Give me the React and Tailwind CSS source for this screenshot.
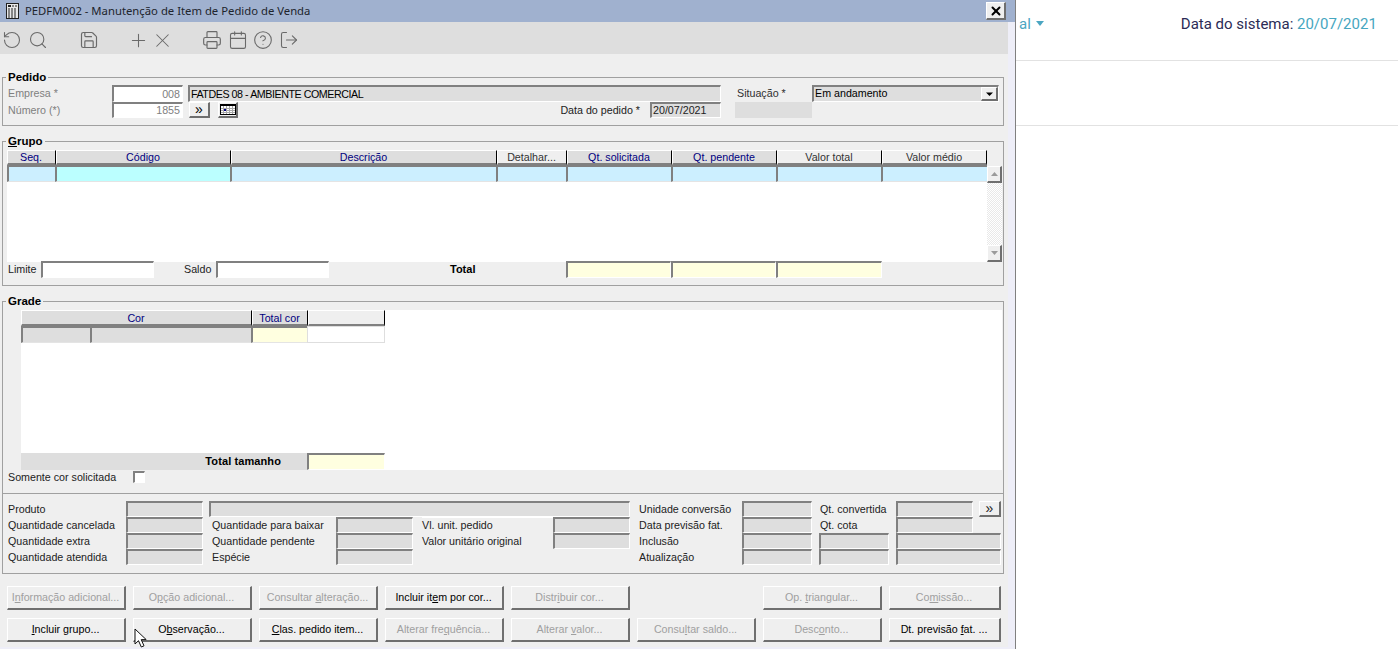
import React from "react";
import { RotateCcw, Search, Save, Plus, X, Printer, Calendar, CircleHelp, LogOut } from "lucide-react";

const sunken = "border-t-2 border-l-2 border-r border-b border-t-[#808080] border-l-[#808080] border-r-white border-b-white";
const raised = "border-t border-l border-r-2 border-b-2 border-t-white border-l-white border-r-[#6f6f6f] border-b-[#6f6f6f]";

function Field({ className = "", children }) {
  return (
    <div className={`${sunken} h-full flex items-center overflow-hidden whitespace-nowrap leading-none shrink-0 ${className}`}>
      {children}
    </div>
  );
}

function Lbl({ className = "", children }) {
  return <div className={`shrink-0 whitespace-nowrap leading-none flex items-center h-full ${className}`}>{children}</div>;
}

function Group({ title, className = "", children }) {
  return (
    <div className={`relative ml-[2px] w-[1002px] border border-[#a0a0a0] ${className}`}>
      {title && (
        <div className="absolute left-[3px] -top-[8px] bg-[#efefef] px-[2px] font-bold text-[11.5px] leading-[14px] text-black">
          {title}
        </div>
      )}
      {children}
    </div>
  );
}

function Head({ className = "", children }) {
  return (
    <div className={`h-full shrink-0 flex items-center justify-center leading-none pt-[1px] pr-[1px] border-t border-l border-t-white border-l-white border-r border-r-black border-b-2 border-b-[#808080] ${className}`}>
      {children}
    </div>
  );
}

function Cell({ className = "" }) {
  return <div className={`h-full shrink-0 border-t-2 border-l-2 border-t-[#808080] border-l-[#808080] border-b border-b-[#e4e4e4] ${className}`} />;
}

function Btn({ off, last, children }) {
  return (
    <button className={`h-[24px] shrink-0 flex items-center justify-center pr-[1px] bg-[#efefef] leading-none ${raised} ${last ? "w-[112px]" : "w-[119px]"} ${off ? "text-[#a0a0a0]" : "text-black"}`}>
      <span>{children}</span>
    </button>
  );
}

function SmallBtn({ className = "", children }) {
  return <div className={`flex items-center justify-center bg-[#efefef] shrink-0 leading-none ${raised} ${className}`}>{children}</div>;
}

function Info({ label, w }) {
  return <Lbl className={w}>{label}</Lbl>;
}

export default function App() {
  return (
    <div className="relative flex h-[649px] w-[1398px] overflow-hidden bg-white font-['Liberation_Sans',Arial,sans-serif] text-[10.7px] text-black">
      {/* Dialog */}
      <div className="w-[1016px] h-full shrink-0 flex flex-col bg-[#eeeef8] border-r border-r-[#808080]">
        <div className="h-[22px] shrink-0 bg-[#a0b1cf] flex items-center relative">
          <svg className="ml-[6px] shrink-0" width="13" height="16" viewBox="0 0 13 16">
            <rect x="0.5" y="0.5" width="12" height="15" fill="#e8e8e8" stroke="#222" />
            <rect x="2" y="2" width="3" height="2" fill="#222" />
            <path d="M6 3h5M2 6h9M2 8h9M2 10h9M2 12h9M2 14h9" stroke="#222" strokeWidth="1" strokeDasharray="2 1" />
          </svg>
          <span className="ml-[6px] font-['Noto_Sans',sans-serif] text-[11.3px] text-[#20242c] whitespace-nowrap leading-none">
            PEDFM002 - Manutenção de Item de Pedido de Venda
          </span>
          <div className={`absolute left-[986px] top-[2px] w-[20px] h-[18px] bg-[#efefef] flex items-center justify-center ${raised}`}>
            <X size={14} strokeWidth={3.4} color="#000" />
          </div>
        </div>

        <div className="w-[1008px] h-[625px] shrink-0 bg-[#efefef] flex flex-col">
          {/* Toolbar */}
          <div className="h-[32px] shrink-0 bg-[#dedede] flex items-center pt-[4px] text-[#6a6a6a]">
            <RotateCcw size={20} strokeWidth={1.3} className="ml-[2px] shrink-0" />
            <Search size={20} strokeWidth={1.3} className="ml-[6px] shrink-0" />
            <Save size={20} strokeWidth={1.4} className="ml-[31px] shrink-0" />
            <Plus size={21} strokeWidth={1.2} className="ml-[29px] shrink-0" />
            <X size={23} strokeWidth={1.1} className="ml-[2px] shrink-0" />
            <Printer size={20} strokeWidth={1.4} className="ml-[28px] shrink-0" />
            <Calendar size={20} strokeWidth={1.3} className="ml-[6px] shrink-0" />
            <CircleHelp size={20} strokeWidth={1.3} className="ml-[5px] shrink-0" />
            <LogOut size={20} strokeWidth={1.3} className="ml-[6px] shrink-0" />
          </div>

          {/* Pedido */}
          <Group title="Pedido" className="mt-[23px] h-[49px] pt-[7px]">
            <div className="flex h-[17px]">
              <Lbl className="w-[109px] pl-[5px] text-[#808080]">Empresa *</Lbl>
              <Field className="w-[71px] justify-end pr-[2px] bg-white text-[#808080]">008</Field>
              <Field className="ml-[5px] w-[533px] bg-[#dedede] pl-[1px] tracking-[-0.45px]">FATDES 08 - AMBIENTE COMERCIAL</Field>
              <Lbl className="ml-[16px] w-[75px] text-[#303030]">Situação *</Lbl>
              <Field className="relative w-[187px] bg-[#dedede] pl-[1px] pb-[2px]">
                Em andamento
                <SmallBtn className="absolute right-0 top-0 w-[17px] h-[14px]">
                  <svg width="7" height="4" viewBox="0 0 7 4"><path d="M0 0.500h7L3.500 4z" fill="#000" /></svg>
                </SmallBtn>
              </Field>
            </div>
            <div className="flex h-[16px]">
              <Lbl className="w-[109px] pl-[5px] text-[#808080]">Número (*)</Lbl>
              <Field className="w-[71px] justify-end pr-[2px] bg-white text-[#808080]">1855</Field>
              <SmallBtn className="ml-[6px] w-[21px] h-[16px] text-[14px] pb-[2px]">»</SmallBtn>
              <SmallBtn className="ml-[8px] w-[20px] h-[16px]">
                <svg width="16" height="11" viewBox="0 0 16 11">
                  <rect x="0.5" y="0.5" width="15" height="10" fill="#fff" stroke="#000" />
                  <path d="M1 1.500h14" stroke="#000" />
                  <path d="M1 4.500h14M1 6.500h14M1 8.500h14M3.500 2v8M6.500 2v8M9.500 2v8M12.500 2v8" stroke="#a8a8a8" strokeWidth="1" />
                  <rect x="4" y="5" width="2" height="2" fill="#000080" />
                </svg>
              </SmallBtn>
              <Lbl className="w-[402px] justify-end text-[#222222]">Data do pedido *</Lbl>
              <Field className="ml-[10px] w-[71px] bg-[#dedede] pl-[1px] text-[#222222]">20/07/2021</Field>
              <div className="ml-[14px] w-[77px] h-full bg-[#dedede]" />
            </div>
          </Group>

          {/* Grupo */}
          <Group title={<><u>G</u>rupo</>} className="mt-[15px] h-[145px] pt-[8px]">
            <div className="ml-[4px] flex h-[112px]">
              <div className="w-[980px] h-full flex flex-col bg-white">
                <div className="flex h-[15px] shrink-0 text-[#000080]">
                  <Head className="w-[49px] bg-[#dedede]">Seq.</Head>
                  <Head className="w-[175px] bg-[#dedede]">Código</Head>
                  <Head className="w-[266px] bg-[#dedede]">Descrição</Head>
                  <Head className="w-[70px] bg-[#efefef] text-[#333333]">Detalhar...</Head>
                  <Head className="w-[105px] bg-[#dedede]">Qt. solicitada</Head>
                  <Head className="w-[105px] bg-[#dedede]">Qt. pendente</Head>
                  <Head className="w-[105px] bg-[#efefef] text-[#333333]">Valor total</Head>
                  <Head className="w-[105px] bg-[#efefef] text-[#333333]">Valor médio</Head>
                </div>
                <div className="flex h-[17px] shrink-0">
                  <Cell className="w-[48px] bg-[#ccefff]" />
                  <Cell className="w-[175px] bg-[#bbffff]" />
                  <Cell className="w-[266px] bg-[#ccefff]" />
                  <Cell className="w-[70px] bg-[#ccefff]" />
                  <Cell className="w-[105px] bg-[#ccefff]" />
                  <Cell className="w-[105px] bg-[#ccefff]" />
                  <Cell className="w-[105px] bg-[#ccefff]" />
                  <Cell className="w-[106px] bg-[#ccefff]" />
                </div>
              </div>
              <div className="w-[15px] h-full pt-[16px] flex flex-col">
                <div className="flex-1 flex flex-col justify-between bg-[repeating-conic-gradient(#ffffff_0_25%,#e9e9e9_0_50%)] bg-[length:2px_2px]">
                  <SmallBtn className="w-[15px] h-[17px]">
                    <svg width="7" height="4" viewBox="0 0 7 4"><path d="M3.500 0L7 4H0z" fill="#9a9a9a" /></svg>
                  </SmallBtn>
                  <SmallBtn className="w-[15px] h-[17px]">
                    <svg width="7" height="4" viewBox="0 0 7 4"><path d="M0 0h7L3.500 4z" fill="#9a9a9a" /></svg>
                  </SmallBtn>
                </div>
              </div>
            </div>
            <div className="flex h-[17px] -mt-[1px]">
              <Lbl className="w-[38px] pl-[5px] text-[#222222]">Limite</Lbl>
              <Field className="w-[113px] bg-white" />
              <Lbl className="ml-[30px] w-[32px] text-[#222222]">Saldo</Lbl>
              <Field className="w-[113px] bg-white" />
              <Lbl className="ml-[121px] w-[116px] font-bold text-[11px]">Total</Lbl>
              <Field className="w-[105px] bg-[#ffffe0]" />
              <Field className="w-[105px] bg-[#ffffe0]" />
              <Field className="w-[106px] bg-[#ffffe0]" />
            </div>
          </Group>

          {/* Grade */}
          <Group title="Grade" className="mt-[15px] h-[192px] pt-[8px] border-b-0">
            <div className="ml-[18px] w-[981px] h-[160px] bg-white flex flex-col">
              <div className="flex h-[16px] shrink-0 text-[#000080]">
                <Head className="w-[231px] bg-[#dedede]">Cor</Head>
                <Head className="w-[56px] bg-[#dedede]">Total cor</Head>
                <Head className="w-[77px] bg-[#efefef]" />
              </div>
              <div className="flex h-[17px] shrink-0">
                <Cell className="w-[69px] bg-[#dedede]" />
                <Cell className="w-[161px] bg-[#dedede]" />
                <Cell className="w-[56px] bg-[#ffffe0]" />
                <div className="w-[78px] h-full border border-[#dedede] bg-white" />
              </div>
              <div className="flex-1" />
              <div className="flex h-[17px] shrink-0">
                <Lbl className="w-[286px] bg-[#dedede] justify-end pr-[26px] font-bold text-[11px] tracking-[0.1px]">Total tamanho</Lbl>
                <Field className="w-[78px] bg-[#ffffe0]" />
              </div>
            </div>
            <div className="flex h-[14px] items-center">
              <Lbl className="w-[130px] pl-[5px] text-[#222222]">Somente cor solicitada</Lbl>
              <div className={`${sunken} w-[12px] h-[12px] bg-white`} />
            </div>
          </Group>

          {/* Info */}
          <Group className="h-[81px] pt-[7px] text-[#222222]">
            <div className="flex h-[16px]">
              <Info label="Produto" w="w-[123px] pl-[5px]" />
              <Field className="w-[77px] bg-[#dedede]" />
              <Field className="ml-[6px] w-[421px] bg-[#dedede]" />
              <Info label="Unidade conversão" w="ml-[9px] w-[103px]" />
              <Field className="w-[70px] bg-[#dedede]" />
              <Info label="Qt. convertida" w="ml-[8px] w-[76px]" />
              <Field className="w-[77px] bg-[#dedede]" />
              <SmallBtn className="ml-[6px] w-[22px] h-[16px] text-[14px] pb-[2px]">»</SmallBtn>
            </div>
            <div className="flex h-[16px]">
              <Info label="Quantidade cancelada" w="w-[123px] pl-[5px]" />
              <Field className="w-[77px] bg-[#dedede]" />
              <Info label="Quantidade para baixar" w="ml-[9px] w-[124px]" />
              <Field className="w-[77px] bg-[#dedede]" />
              <Info label="Vl. unit. pedido" w="ml-[9px] w-[131px] border-t border-t-white" />
              <Field className="w-[77px] bg-[#dedede]" />
              <Info label="Data previsão fat." w="ml-[9px] w-[103px]" />
              <Field className="w-[70px] bg-[#dedede]" />
              <Info label="Qt. cota" w="ml-[8px] w-[76px]" />
              <Field className="w-[77px] bg-[#dedede]" />
            </div>
            <div className="flex h-[16px]">
              <Info label="Quantidade extra" w="w-[123px] pl-[5px]" />
              <Field className="w-[77px] bg-[#dedede]" />
              <Info label="Quantidade pendente" w="ml-[9px] w-[124px]" />
              <Field className="w-[77px] bg-[#dedede]" />
              <Info label="Valor unitário original" w="ml-[9px] w-[131px]" />
              <Field className="w-[77px] bg-[#dedede]" />
              <Info label="Inclusão" w="ml-[9px] w-[103px]" />
              <Field className="w-[70px] bg-[#dedede]" />
              <Field className="ml-[7px] w-[70px] bg-[#dedede]" />
              <Field className="ml-[7px] w-[105px] bg-[#dedede]" />
            </div>
            <div className="flex h-[16px]">
              <Info label="Quantidade atendida" w="w-[123px] pl-[5px]" />
              <Field className="w-[77px] bg-[#dedede]" />
              <Info label="Espécie" w="ml-[9px] w-[124px]" />
              <Field className="w-[77px] bg-[#dedede]" />
              <div className="w-[217px] shrink-0" />
              <Info label="Atualização" w="ml-[9px] w-[103px]" />
              <Field className="w-[70px] bg-[#dedede]" />
              <Field className="ml-[7px] w-[70px] bg-[#dedede]" />
              <Field className="ml-[7px] w-[105px] bg-[#dedede]" />
            </div>
          </Group>

          {/* Buttons */}
          <div className="mt-[12px] pl-[7px] flex flex-col gap-[8px]">
            <div className="flex gap-[7px]">
              <Btn off>I<u>n</u>formação adicional...</Btn>
              <Btn off>O<u>p</u>ção adicional...</Btn>
              <Btn off>Consultar <u>a</u>lteração...</Btn>
              <Btn>Incluir it<u>e</u>m por cor...</Btn>
              <Btn off>Distr<u>i</u>buir cor...</Btn>
              <div className="w-[119px] shrink-0" />
              <Btn off>Op. <u>t</u>riangular...</Btn>
              <Btn off last>Co<u>m</u>issão...</Btn>
            </div>
            <div className="flex gap-[7px]">
              <Btn><u>I</u>ncluir grupo...</Btn>
              <Btn>O<u>b</u>servação...</Btn>
              <Btn><u>C</u>las. pedido item...</Btn>
              <Btn off>Alterar fre<u>q</u>uência...</Btn>
              <Btn off>Alterar <u>v</u>alor...</Btn>
              <Btn off>Consu<u>l</u>tar saldo...</Btn>
              <Btn off>Desc<u>o</u>nto...</Btn>
              <Btn last>Dt. previsão <u>f</u>at. ...</Btn>
            </div>
          </div>
        </div>
      </div>

      {/* Right side */}
      <div className="flex-1 flex flex-col font-['Roboto',sans-serif] text-[15px]">
        <div className="h-[61px] shrink-0 border-b border-b-[#e2e2e2] flex items-start pt-[14px]">
          <span className="ml-[3px] text-[#4ba6c2] leading-[20px]">al</span>
          <svg className="ml-[5px] mt-[7px]" width="8" height="5" viewBox="0 0 8 5"><path d="M0 0h8L4 5z" fill="#4ba6c2" /></svg>
          <div className="ml-[137px] leading-[20px] whitespace-nowrap text-[#2b2b55]">
            Data do sistema: <span className="text-[#46a6c0]">20/07/2021</span>
          </div>
        </div>
        <div className="h-[65px] shrink-0 border-b border-b-[#e2e2e2]" />
      </div>

      {/* Mouse pointer */}
      <svg className="absolute left-[134px] top-[628px]" width="15" height="21" viewBox="0 0 15 21">
        <path d="M1 1v15l3.500-3.300 2.800 6.300 2.700-1.200-2.800-6.200h5z" fill="#fff" stroke="#111" strokeWidth="1" strokeLinejoin="round" />
      </svg>
    </div>
  );
}
